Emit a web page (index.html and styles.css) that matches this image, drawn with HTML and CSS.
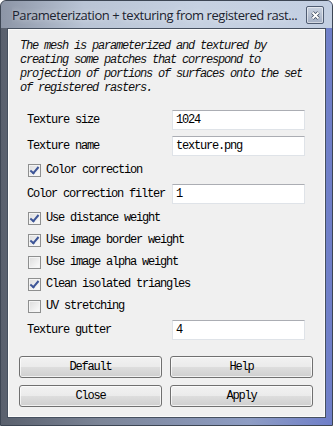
FILE: index.html
```html
<!DOCTYPE html>
<html lang="en">
<head>
    <meta charset="UTF-8">
    <title>Parameterization + texturing from registered rasters</title>
    <link rel="stylesheet" href="styles.css">
</head>
<body>
    <div class="window">
        <div class="titlebar">
            <div class="title">Parameterization + texturing from registered rast...</div>
            <div class="close">
                <svg width="9" height="9" viewBox="0 0 9 9">
                    <path d="M1.5 1.5 L7.5 7.5 M7.5 1.5 L1.5 7.5" stroke="#3a4658" stroke-width="3.4" fill="none"/>
                    <path d="M1.5 1.5 L7.5 7.5 M7.5 1.5 L1.5 7.5" stroke="#fff" stroke-width="2" fill="none"/>
                </svg>
            </div>
        </div>
        <div class="client">
            <p class="help">The mesh is parameterized and textured by creating some patches that correspond to projection of portions of surfaces onto the set of registered rasters.</p>

            <div class="form">
                <div class="row field">
                    <label>Texture size</label>
                    <div class="input">1024</div>
                </div>
                <div class="row field">
                    <label>Texture name</label>
                    <div class="input">texture.png</div>
                </div>
                <div class="row check">
                    <span class="box on"></span>
                    <label>Color correction</label>
                </div>
                <div class="row field">
                    <label>Color correction filter</label>
                    <div class="input">1</div>
                </div>
                <div class="row check">
                    <span class="box on"></span>
                    <label>Use distance weight</label>
                </div>
                <div class="row check">
                    <span class="box on"></span>
                    <label>Use image border weight</label>
                </div>
                <div class="row check">
                    <span class="box"></span>
                    <label>Use image alpha weight</label>
                </div>
                <div class="row check">
                    <span class="box on"></span>
                    <label>Clean isolated triangles</label>
                </div>
                <div class="row check">
                    <span class="box"></span>
                    <label>UV stretching</label>
                </div>
                <div class="row field">
                    <label>Texture gutter</label>
                    <div class="input">4</div>
                </div>
            </div>

            <div class="buttons">
                <div class="btn">Default</div>
                <div class="btn">Help</div>
                <div class="btn">Close</div>
                <div class="btn">Apply</div>
            </div>
        </div>
    </div>
</body>
</html>
```

FILE: styles.css
```css
*{
    margin: 0;
    padding: 0;
    box-sizing: border-box;
}
body{
    width: 333px;
    height: 426px;
    overflow: hidden;
    font-family: 'Liberation Mono', 'DejaVu Sans Mono', monospace;
    font-size: 12px;
    letter-spacing: -1.2px;
    color: #000;
}
.window{
    width: 333px;
    height: 426px;
    border: 1px solid #3d4654;
    border-radius: 6px 6px 0 0;
    background: linear-gradient(to right, #59606d 0%, #7c8597 30%, #8e9dc4 75%, #6f7fc9 100%);
    display: flex;
    flex-direction: column;
}
.titlebar{
    height: 27px;
    display: flex;
    align-items: center;
    padding-left: 11px;
    border-radius: 5px 5px 0 0;
    background: linear-gradient(to right, #8c95a6 0%, #b9c4d5 25%, #c6d1e1 60%, #c3cfe2 100%);
}
.title{
    flex: 1;
    min-width: 0;
    overflow: hidden;
    font-family: 'Open Sans', 'Liberation Sans', sans-serif;
    font-size: 13px;
    letter-spacing: -0.45px;
    color: #1b2330;
    white-space: nowrap;
    text-shadow: 0 0 6px rgba(255,255,255,.7);
}
.close{
    flex: none;
    width: 18px;
    height: 18px;
    margin: 1px 8px 0 4px;
    border: 1px solid #4f5c72;
    border-radius: 2px;
    background: linear-gradient(#c9d2e0, #a5b0c4);
    box-shadow: inset 0 0 0 1px rgba(255,255,255,.5);
    display: flex;
    justify-content: center;
    align-items: center;
}
.client{
    margin: 0 6px 7px;
    height: 390px;
    border: 1px solid #46505f;
    box-shadow: inset 0 0 0 1px #fbfbfb;
    background: #f0f0f0;
    padding: 10px 0 0 0;
}
.help{
    padding-left: 12px;
    width: 305px;
    font-style: italic;
    line-height: 14px;
    color: #111;
}
.form{
    margin-top: 12px;
    padding-left: 19px;
}
.row{
    display: flex;
    align-items: center;
}
.row.field{
    height: 26px;
}
.row.field label{
    width: 145px;
    white-space: nowrap;
}
.row.check{
    height: 22px;
}
.input{
    width: 133px;
    height: 20px;
    background: #fff;
    border: 1px solid #dfe3e8;
    border-top-color: #abadb3;
    padding-left: 3px;
    line-height: 18px;
}
.box{
    width: 13px;
    height: 13px;
    margin-right: 5px;
    margin-left: 1px;
    border: 1px solid #8e8f8f;
    background: linear-gradient(135deg, #dcdcdc, #fdfdfd);
    box-shadow: inset 0 0 0 1px #f4f4f4;
    position: relative;
}
.box.on::after{
    content: "";
    position: absolute;
    left: 3px;
    top: 0px;
    width: 3px;
    height: 7px;
    border: solid #3d5597;
    border-width: 0 2px 2px 0;
    transform: rotate(40deg);
}
.buttons{
    display: grid;
    grid-template-columns: 143px 143px;
    column-gap: 8px;
    row-gap: 7px;
    margin: 13px 0 0 11px;
}
.btn{
    height: 22px;
    border: 1px solid #707070;
    border-radius: 3px;
    background: linear-gradient(#f2f2f2 0%, #ebebeb 48%, #dddddd 52%, #cfcfcf 100%);
    box-shadow: inset 0 0 0 1px rgba(255,255,255,.7);
    display: flex;
    justify-content: center;
    align-items: center;
}
```
